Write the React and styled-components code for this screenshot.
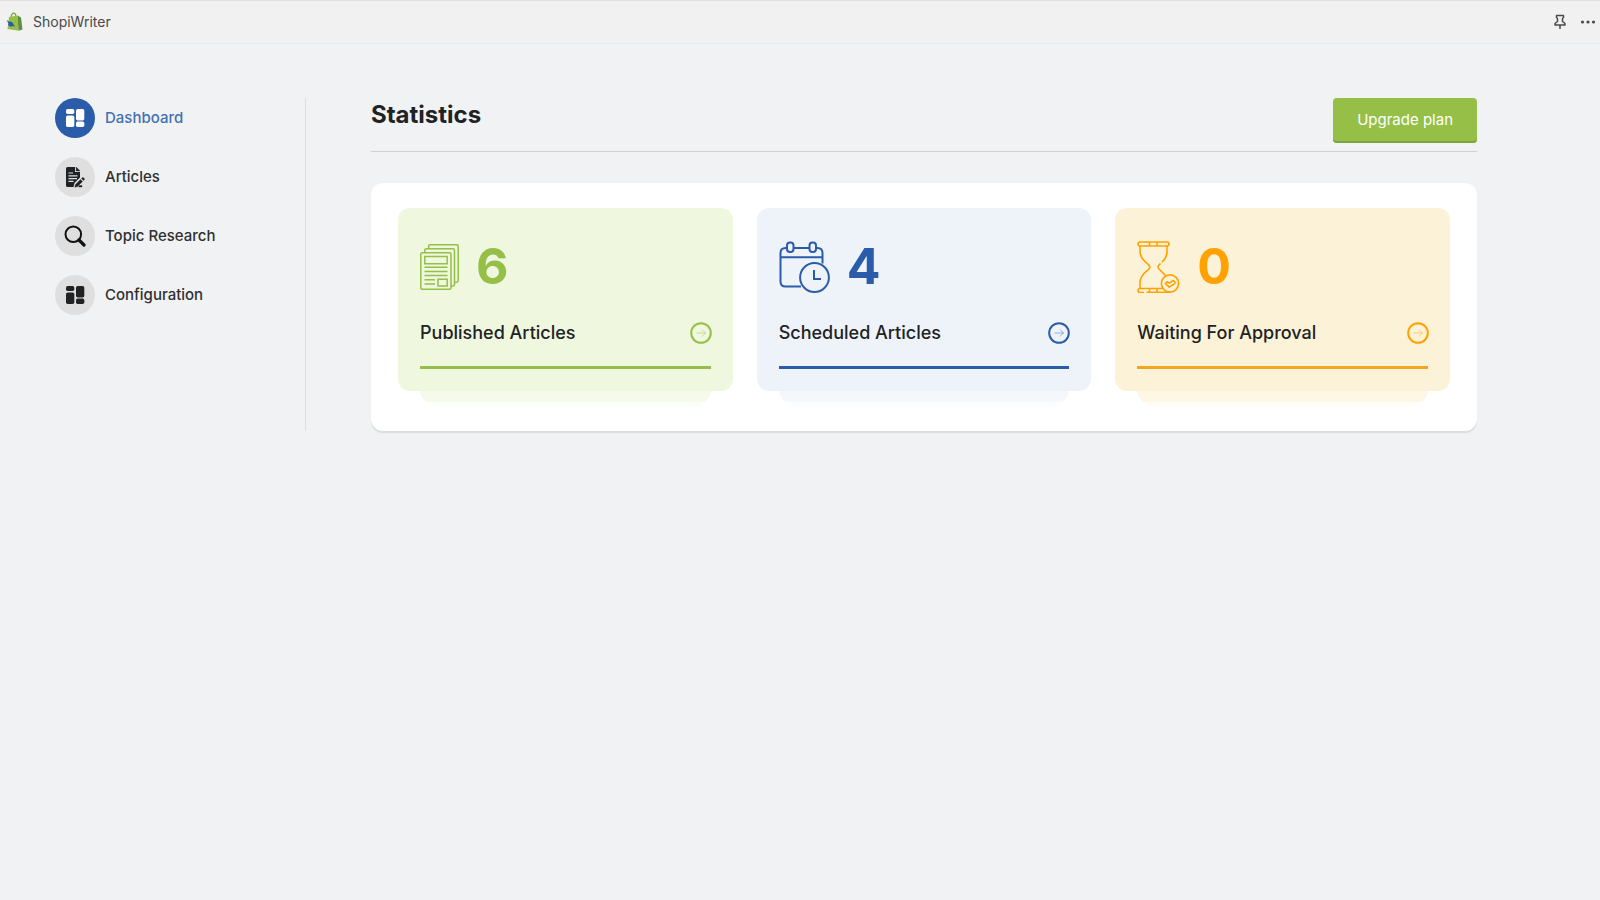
import styled, { createGlobalStyle } from 'styled-components';

const GlobalStyle = createGlobalStyle`
  * {
    box-sizing: border-box;
  }

  body {
    margin: 0;
    color: #202223;
    background: #f0f2f4;
    font-family: Inter, 'Liberation Sans', sans-serif;
  }
`;

const TopBar = styled.header`
  gap: 4px;
  height: 44px;
  display: flex;
  align-items: center;
  padding-left: 6px;
  background: #f1f1f1;
  border-top: 1px solid #dedede;
  border-bottom: 1px solid #e8eaeb;
`;

const AppName = styled.span`
  flex: 1;
  color: #4a4a4a;
  font-size: 14px;
  line-height: 20px;
  margin-left: 6px;
`;

const BarButton = styled.button`
  width: 24px;
  height: 28px;
  padding: 0;
  border: none;
  display: flex;
  color: #4a4a4a;
  cursor: pointer;
  background: none;
  align-items: center;
  justify-content: center;
`;

const Layout = styled.div`
  gap: 65px;
  display: flex;
  padding: 54px 123px 54px 55px;
`;

const Sidebar = styled.nav`
  gap: 19px;
  width: 251px;
  display: flex;
  flex-shrink: 0;
  flex-direction: column;
  border-right: 1px solid #dcdee0;
`;

const NavIcon = styled.span`
  width: 40px;
  height: 40px;
  display: flex;
  color: #202223;
  border-radius: 50%;
  align-items: center;
  background: #dfdfdf;
  justify-content: center;
`;

const NavLink = styled.a`
  gap: 10px;
  display: flex;
  font-size: 15px;
  font-weight: 500;
  line-height: 20px;
  align-items: center;
  text-decoration: none;
  color: ${({ $active }) => ($active ? '#4470b5' : '#303030')};

  ${NavIcon} {
    ${({ $active }) => $active && 'color: #fff; background: #2a5caa;'}
  }
`;

const Main = styled.main`
  flex: 1;
  min-width: 0;
`;

const Header = styled.div`
  display: flex;
  padding-bottom: 8px;
  align-items: flex-start;
  justify-content: space-between;
  border-bottom: 1px solid #cfd1d3;
`;

const Title = styled.h1`
  margin: 0;
  font-size: 24px;
  font-weight: 700;
  line-height: 34px;
`;

const UpgradeButton = styled.button`
  height: 45px;
  color: #fff;
  border: none;
  font-size: 15px;
  cursor: pointer;
  padding: 0 24px 2px;
  font-family: inherit;
  border-radius: 4px;
  background: #95bf47;
  box-shadow: inset 0 -2px 0 #7da53a;
`;

const Panel = styled.section`
  gap: 24px;
  display: grid;
  margin-top: 31px;
  background: #fff;
  border-radius: 12px;
  padding: 25px 27px 40px;
  box-shadow: 0 2px 1px #dadcde;
  grid-template-columns: repeat(3, 1fr);
`;

const Card = styled.article`
  position: relative;
  border-radius: 12px;
  padding: 33px 22px 22px;
  background: ${({ $tone }) => $tone.fill};

  /* stacked sheets below the card */
  &::before,
  &::after {
    left: 22px;
    right: 22px;
    content: '';
    position: absolute;
  }

  &::before {
    top: 100%;
    height: 16px;
    border-radius: 0 0 24px 24px / 0 0 16px 16px;
    background: linear-gradient(
      ${({ $tone }) => `${$tone.sheet} 10px, ${$tone.faint} 11px`}
    );
  }

  &::after {
    bottom: 22px;
    height: 3px;
    background: ${({ $tone }) => $tone.rule};
  }
`;

const Figure = styled.div`
  gap: 17px;
  height: 52px;
  display: flex;
  align-items: center;
  color: ${({ $tone }) => $tone.main};
`;

const Count = styled.strong`
  font-size: 50px;
  font-weight: 700;
  line-height: 52px;
  padding-bottom: 2px;
`;

const CardFooter = styled.div`
  display: flex;
  align-items: center;
  margin: 28px -1px 24px 0;
  justify-content: space-between;
`;

const CardTitle = styled.h2`
  margin: 0;
  font-size: 18px;
  font-weight: 500;
  line-height: 24px;
`;

const ArrowLink = styled.a`
  display: flex;
  color: ${({ $tone }) => $tone.main};
`;

const green = { main: '#95bf47', rule: '#98bd4c', fill: '#eff7df', sheet: '#f5faea', faint: '#fbfdf7' };
const blue = { main: '#2a5caa', rule: '#2a5caa', fill: '#eef3fa', sheet: '#f4f7fc', faint: '#fbfcfe' };
const orange = { main: '#ffa200', rule: '#f4a51e', fill: '#fcf2d8', sheet: '#fef7e6', faint: '#fffcf5' };

const Logo = () => (
  <svg width="17" height="20" viewBox="0 0 17 20">
    <path d="M5 5C6 0 9.500 0 10 4.500" fill="none" stroke="#7ba83b" strokeWidth="1.200" />
    <path d="M3 5 11.500 3.500 12.500 18.800 1.500 17Z" fill="#95bf47" />
    <path d="M11.500 3.500 15 5.500 16.500 17.500 12.500 18.800Z" fill="#5e8e3e" />
    <path d="M.5 8 3 9.500l3 .5 3 4.500-3-.5-1 1-3-2 .5-1.500Z" fill="#2a5caa" />
  </svg>
);

const PinIcon = () => (
  <svg width="12" height="16" viewBox="0 0 12 16" fill="none" stroke="currentColor" strokeWidth="1.500" strokeLinejoin="round">
    <path d="M2.500 1.500h7v2L8.500 4.500v3l2.500 2v1.500H1V9.500l2.500-2v-3l-1-1ZM6 11v4" />
  </svg>
);

const MoreIcon = () => (
  <svg width="16" height="4" viewBox="0 0 16 4" fill="currentColor">
    <circle cx="2.500" cy="2" r="1.600" />
    <circle cx="8" cy="2" r="1.600" />
    <circle cx="13.500" cy="2" r="1.600" />
  </svg>
);

const GridIcon = () => (
  <svg width="20" height="20" viewBox="0 0 20 20" fill="currentColor">
    <rect x="1" y="1" width="8.300" height="5" rx="1.700" />
    <rect x="1" y="7.500" width="8.300" height="11.500" rx="1.700" />
    <rect x="11" y="1" width="8.300" height="11.500" rx="1.700" />
    <rect x="11" y="13.500" width="8.300" height="5.500" rx="1.700" />
  </svg>
);

const ArticleIcon = () => (
  <svg width="20" height="22" viewBox="0 0 20 22">
    <path d="M2.500 1H10v5h5v5.500L9.500 17l-1 4h-6Q1 21 1 19.500v-17Q1 1 2.500 1Z" fill="currentColor" />
    <path d="m11.200 1 3.800 4h-3.800ZM16.500 12.500l2 2 .8-.8q.4-1-.5-1.700-.9-.7-1.600-.2ZM15.500 13.500l2 2-5 5-2.700.7.700-2.700ZM14.500 19.500H17V21h-3.500Z" fill="currentColor" stroke="currentColor" strokeWidth=".4" />
    <path d="M3.500 7H8M3.500 9.800h9M3.500 12.600H12M3.500 15.400h5" stroke="#dfdfdf" strokeWidth="1.200" />
  </svg>
);

const SearchIcon = () => (
  <svg width="22" height="22" viewBox="0 0 22 22" fill="none" stroke="#111">
    <circle cx="9.300" cy="9.300" r="7.800" strokeWidth="2" />
    <path d="m15 15 5 5" strokeWidth="3.200" strokeLinecap="round" />
  </svg>
);

const PapersIcon = () => (
  <svg width="39" height="46" viewBox="0 0 39 46" fill="none" stroke="currentColor" strokeWidth="1.500">
    <rect x=".8" y="8.700" width="30.200" height="36.500" rx="1.500" />
    <path d="M4.800 8.500V6.200q0-1.500 1.500-1.500h26.500q1.700 0 1.700 1.500v34.300q0 1.400-1.400 1.400h-2" />
    <path d="M8.600 4.700V2.300q0-1.500 1.500-1.500h26.400q1.700 0 1.700 1.500v34.500q0 1.400-1.400 1.400h-2.200" />
    <path d="M4.800 12.500h22.400v7.300H4.800ZM4.500 23.200h23M4.500 27.400h23M4.500 31.600h23M4.500 35.800H15M4.500 40H15M18 35.300h9.200V42H18Z" />
  </svg>
);

const CalendarIcon = () => (
  <svg width="51" height="52" viewBox="0 0 51 52" fill="none" stroke="currentColor" strokeWidth="2">
    <path d="M22 45.500H6.500Q1.500 45.500 1.500 40.500V12q0-5 5-5H8m6.500 0H30.500m6.500 0H38.500q5 0 5 5v10.500M1.500 16.300H43.500" />
    <rect x="8" y="1.500" width="6.500" height="9.500" rx="3" />
    <rect x="30.500" y="1.500" width="6.500" height="9.500" rx="3" />
    <circle cx="35.500" cy="36.500" r="14.400" />
    <path d="M35 29v9H42" />
  </svg>
);

const HourglassIcon = () => (
  <svg width="43" height="52" viewBox="0 0 43 52" fill="none" stroke="currentColor" strokeWidth="1.600">
    <rect x="1" y="1" width="31" height="4" rx="2" />
    <path d="M12.500 1v4M20 1v4M12.500 47.500v4M20 47.500v4" />
    <path d="M3 5v5c0 9 7 11.500 9 14.200q1.500 2 0 3.800C10 30.500 3 33.500 3 42v5.500M30 5v5c0 6-2 8.500-5 11M23.500 22.500q-4 3-1.500 5.500l6.500 6.500" />
    <path d="M25.500 47.500H3q-2 0-2 2t2 2h4M9.500 51.200H33" />
    <circle cx="33" cy="42.500" r="8.600" />
    <path d="m28.300 42.500 1.700-1.700 2.300 1.300 4-2.600 1.700 1.500q.5 1-.8 1.900l-5 3.200Z" strokeLinejoin="round" />
  </svg>
);

const ArrowIcon = () => (
  <svg width="22" height="22" viewBox="0 0 22 22" fill="none" stroke="currentColor">
    <circle cx="11" cy="11" r="9.800" strokeWidth="2" />
    <path d="M6.500 11h9M12 7.500l3.500 3.500-3.500 3.500" strokeWidth=".8" opacity=".6" />
  </svg>
);

const navItems = [
  { label: 'Dashboard', icon: GridIcon, active: true },
  { label: 'Articles', icon: ArticleIcon },
  { label: 'Topic Research', icon: SearchIcon },
  { label: 'Configuration', icon: GridIcon },
];

const stats = [
  { label: 'Published Articles', count: 6, icon: PapersIcon, tone: green },
  { label: 'Scheduled Articles', count: 4, icon: CalendarIcon, tone: blue },
  { label: 'Waiting For Approval', count: 0, icon: HourglassIcon, tone: orange },
];

function App() {
  return (
    <>
      <GlobalStyle />
      <TopBar>
        <Logo />
        <AppName>ShopiWriter</AppName>
        <BarButton aria-label="Pin app"><PinIcon /></BarButton>
        <BarButton aria-label="More actions"><MoreIcon /></BarButton>
      </TopBar>
      <Layout>
        <Sidebar>
          {navItems.map(({ label, icon: Icon, active }) => (
            <NavLink key={label} href="#" $active={active}>
              <NavIcon><Icon /></NavIcon>
              {label}
            </NavLink>
          ))}
        </Sidebar>
        <Main>
          <Header>
            <Title>Statistics</Title>
            <UpgradeButton>Upgrade plan</UpgradeButton>
          </Header>
          <Panel>
            {stats.map(({ label, count, icon: Icon, tone }) => (
              <Card key={label} $tone={tone}>
                <Figure $tone={tone}>
                  <Icon />
                  <Count>{count}</Count>
                </Figure>
                <CardFooter>
                  <CardTitle>{label}</CardTitle>
                  <ArrowLink href="#" aria-label={label} $tone={tone}><ArrowIcon /></ArrowLink>
                </CardFooter>
              </Card>
            ))}
          </Panel>
        </Main>
      </Layout>
    </>
  );
}

export default App;
